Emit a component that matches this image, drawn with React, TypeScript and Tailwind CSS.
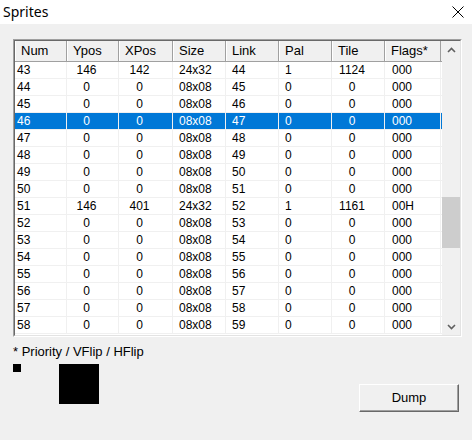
import React from "react";

type Row = {
  num: string;
  ypos: string;
  xpos: string;
  size: string;
  link: string;
  pal: string;
  tile: string;
  flags: string;
};

const rows: Row[] = [
  { num: "43", ypos: "146", xpos: "142", size: "24x32", link: "44", pal: "1", tile: "1124", flags: "000" },
  ...[44, 45, 46, 47, 48, 49, 50].map((n) => ({
    num: String(n),
    ypos: "0",
    xpos: "0",
    size: "08x08",
    link: String(n + 1),
    pal: "0",
    tile: "0",
    flags: "000",
  })),
  { num: "51", ypos: "146", xpos: "401", size: "24x32", link: "52", pal: "1", tile: "1161", flags: "00H" },
  ...[52, 53, 54, 55, 56, 57, 58].map((n) => ({
    num: String(n),
    ypos: "0",
    xpos: "0",
    size: "08x08",
    link: String(n + 1),
    pal: "0",
    tile: "0",
    flags: "000",
  })),
];

// column widths, measured off the dialog
const cols = [
  { key: "num", label: "Num", w: "w-[52px]", cell: "pl-[2px]" },
  { key: "ypos", label: "Ypos", w: "w-[52px]", cell: "text-center pr-[12px]" },
  { key: "xpos", label: "XPos", w: "w-[54px]", cell: "text-center pr-[12px]" },
  { key: "size", label: "Size", w: "w-[53px]", cell: "pl-[6px]" },
  { key: "link", label: "Link", w: "w-[53px]", cell: "pl-[6px]" },
  { key: "pal", label: "Pal", w: "w-[53px]", cell: "pl-[6px]" },
  { key: "tile", label: "Tile", w: "w-[53px]", cell: "text-center pr-[12px]" },
  { key: "flags", label: "Flags*", w: "w-[56px]", cell: "pl-[7px]" },
] as const;

function Chevron({ up }: { up?: boolean }) {
  return (
    <svg width="9" height="6" viewBox="0 0 9 6">
      <path
        d={up ? "M1 5 L4.5 1.5 L8 5" : "M1 1 L4.5 4.5 L8 1"}
        fill="none"
        stroke="#606060"
        strokeWidth="1.6"
      />
    </svg>
  );
}

export default function App() {
  const selected = "46";

  return (
    <div className="w-[472px] h-[440px] bg-[#f0f0f0] font-['Liberation_Sans',Arial,sans-serif] text-black overflow-hidden">
      {/* title bar */}
      <div className="h-[24px] bg-white flex items-center justify-between pl-[3px] pr-[8px]">
        <span className="font-['Noto_Sans',sans-serif] text-[14px] leading-none">Sprites</span>
        <svg width="12" height="12" viewBox="0 0 12 12">
          <path d="M0.5 0.5 L11.5 11.5 M11.5 0.5 L0.5 11.5" stroke="#000" strokeWidth="1" />
        </svg>
      </div>

      {/* list view */}
      <div className="mt-[15px] ml-[13px] w-[449px] h-[298px] border border-t-[#a0a0a0] border-l-[#a0a0a0] border-b-white border-r-white">
        <div className="w-full h-full border border-t-[#696969] border-l-[#696969] border-b-[#e3e3e3] border-r-[#e3e3e3] bg-white flex">
          <div className="flex-1 overflow-hidden">
            <div className="flex h-[21px] bg-[#f0f0f0] border-b border-[#a0a0a0]">
              {cols.map((c) => (
                <div
                  key={c.key}
                  className={`${c.w} shrink-0 flex items-center pl-[6px] text-[13px] border-r border-r-[#a0a0a0] shadow-[inset_1px_0_0_#ffffff]`}
                >
                  {c.label}
                </div>
              ))}
            </div>
            {rows.map((r) => {
              const sel = r.num === selected;
              return (
                <div
                  key={r.num}
                  className={`flex h-[17px] border-b border-[#f0f0f0] text-[12px] ${
                    sel ? "bg-[#0078d7] text-white" : "bg-white"
                  }`}
                >
                  {cols.map((c) => (
                    <div
                      key={c.key}
                      className={`${c.w} ${c.cell} shrink-0 leading-[16px] border-r border-[#f0f0f0]`}
                    >
                      {r[c.key]}
                    </div>
                  ))}
                </div>
              );
            })}
          </div>

          {/* scrollbar */}
          <div className="w-[18px] shrink-0 bg-[#f0f0f0] flex flex-col">
            <div className="h-[17px] flex items-center justify-center">
              <Chevron up />
            </div>
            <div className="flex-1">
              <div className="mt-[139px] h-[51px] bg-[#cdcdcd]" />
            </div>
            <div className="h-[17px] flex items-center justify-center">
              <Chevron />
            </div>
          </div>
        </div>
      </div>

      <div className="mt-[8px] ml-[13px] text-[13px] leading-[14px]">* Priority / VFlip / HFlip</div>

      <div className="flex justify-between mt-[5px] pl-[13px] pr-[13px]">
        <div className="flex items-start gap-[38px]">
          <div className="w-[8px] h-[8px] bg-black" />
          <div className="w-[40px] h-[40px] bg-black" />
        </div>
        <button className="mt-[20px] w-[100px] h-[28px] bg-[#f0f0f0] text-[13px] border border-t-white border-l-white border-b-[#696969] border-r-[#696969] shadow-[inset_-1px_-1px_0_#a0a0a0]">
          Dump
        </button>
      </div>
    </div>
  );
}
